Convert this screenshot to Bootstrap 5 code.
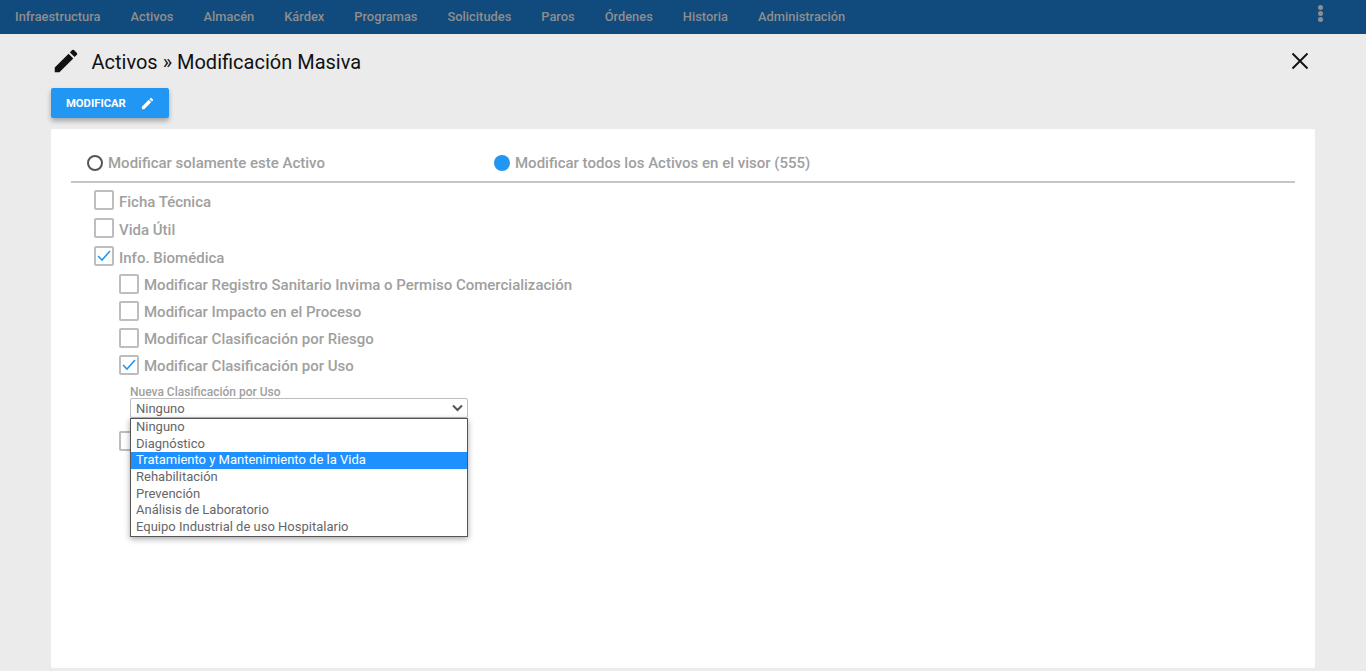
<!DOCTYPE html>
<html lang="es">
<head>
<meta charset="utf-8">
<title>Activos » Modificación Masiva</title>
<link href="https://cdn.jsdelivr.net/npm/bootstrap@5.3.0/dist/css/bootstrap.min.css" rel="stylesheet">
<style>
html,body{height:671px;overflow:hidden}
body{background:#ebebeb;font-family:Roboto,"Liberation Sans",sans-serif;color:#111}
.topbar{height:34px;background:#114b7d;padding:0 15px;gap:30px}
.topbar a{color:#8e8e8e;font-size:12.87px;font-weight:500;text-decoration:none;line-height:34px}
.dots{margin-left:auto;margin-right:28px;margin-top:-7px;display:flex;flex-direction:column;gap:1px}
.dots i{display:block;width:5px;height:5px;border-radius:50%;background:#8e8e8e}
.pagewrap{padding:0 51px}
.headrow{height:54px}
.headrow h1{font-size:20px;font-weight:400;margin:2px 0 0 10.5px;color:#111}
.closex{margin-left:auto;margin-right:6px}
.modbtn{width:118px;height:30px;background:#2196f3;color:#fff;font-size:11.25px;font-weight:700;border-radius:2px;border:0;padding:0 14px 0 15px;box-shadow:0 3px 5px rgba(0,0,0,.3)}
.modbtn:hover{background:#2196f3;color:#fff}
.modlabel{margin-top:2px}
.sheet{background:#fff;margin-top:11px;height:539px;padding:0 20px;border-radius:2px}
.radios{height:54px;border-bottom:2px solid #c8c5c5;padding:16px 0 0 16px}
.radio-item{gap:5px;color:#a0a0a0;font-size:15px;font-weight:500}
.radio-a{width:407px}
.dot{width:16px;height:16px;border-radius:50%;display:block}
.dot-off{border:2px solid #555}
.dot-on{background:#2196f3}
.checks{padding:5px 0 0 23px}
.chk-row{height:28px;gap:5px;color:#a0a0a0;font-size:15px;font-weight:500}
.sub .chk-row{height:27px}
.sub{padding-left:25px}
.box{width:20px;height:20px;border:2px solid #bdbdbd;border-radius:2px;background:#fff;flex:none;display:flex;align-items:center;justify-content:center}
.chk-row .box{margin-top:-4px}
.selectwrap{position:relative;margin:7px 0 0 11px;width:338px}
.selectwrap label{display:block;color:#a0a0a0;font-size:12px;font-weight:500;line-height:11px}
.fakeselect{height:20px;border:1px solid #bdbdbd;border-radius:2px;padding:0 4px 0 5px;font-size:13px;color:#666;line-height:19px}
.fakeselect svg{margin-left:auto}
.optlist{position:absolute;top:31px;left:0;width:338px;background:#fff;border:1px solid #555;box-shadow:0 2px 6px rgba(0,0,0,.35);z-index:5;margin:0;padding:0}
.optlist li{list-style:none;height:16.7px;line-height:16.7px;font-size:13px;color:#666;padding-left:5px;white-space:nowrap}
.optlist li.picked{background:#1e90ff;color:#fff}
.underbox{margin-top:13px}
</style>
</head>
<body>
<nav class="topbar d-flex align-items-center">
<a href="#">Infraestructura</a><a href="#">Activos</a><a href="#">Almacén</a><a href="#">Kárdex</a><a href="#">Programas</a><a href="#">Solicitudes</a><a href="#">Paros</a><a href="#">Órdenes</a><a href="#">Historia</a><a href="#">Administración</a>
<span class="dots"><i></i><i></i><i></i></span>
</nav>
<div class="pagewrap">
<div class="headrow d-flex align-items-center">
<svg width="30" height="30" viewBox="0 0 24 24" fill="#111"><path d="M3 17.25V21h3.75L17.81 9.94l-3.75-3.75L3 17.25zM20.71 7.04a1 1 0 0 0 0-1.41l-2.34-2.34a1 1 0 0 0-1.41 0l-1.83 1.83 3.75 3.75 1.83-1.83z"/></svg>
<h1>Activos » Modificación Masiva</h1>
<svg class="closex" width="18" height="18" viewBox="0 0 18 18" fill="none" stroke="#111" stroke-width="1.9"><path d="M1.5 1.5l15 15M16.5 1.5l-15 15"/></svg>
</div>
<button type="button" class="btn modbtn d-flex align-items-center justify-content-between"><span class="modlabel">MODIFICAR</span>
<svg width="15" height="15" viewBox="0 0 24 24" fill="#fff"><path d="M3 17.25V21h3.75L17.81 9.94l-3.75-3.75L3 17.25zM20.71 7.04a1 1 0 0 0 0-1.41l-2.34-2.34a1 1 0 0 0-1.41 0l-1.83 1.83 3.75 3.75 1.83-1.83z"/></svg></button>
<div class="sheet">
<div class="radios d-flex align-items-center">
<div class="radio-item radio-a d-flex align-items-center"><span class="dot dot-off"></span>Modificar solamente este Activo</div>
<div class="radio-item d-flex align-items-center"><span class="dot dot-on"></span>Modificar todos los Activos en el visor (555)</div>
</div>
<div class="checks">
<div class="chk-row d-flex align-items-center"><span class="box"></span>Ficha Técnica</div>
<div class="chk-row d-flex align-items-center"><span class="box"></span>Vida Útil</div>
<div class="chk-row d-flex align-items-center"><span class="box"><svg width="14" height="12" viewBox="0 0 14 12" fill="none" stroke="#2196f3" stroke-width="1.6"><path d="M1 6l4 4 8-9"/></svg></span>Info. Biomédica</div>
<div class="sub">
<div class="chk-row d-flex align-items-center"><span class="box"></span>Modificar Registro Sanitario Invima o Permiso Comercialización</div>
<div class="chk-row d-flex align-items-center"><span class="box"></span>Modificar Impacto en el Proceso</div>
<div class="chk-row d-flex align-items-center"><span class="box"></span>Modificar Clasificación por Riesgo</div>
<div class="chk-row d-flex align-items-center"><span class="box"><svg width="14" height="12" viewBox="0 0 14 12" fill="none" stroke="#2196f3" stroke-width="1.6"><path d="M1 6l4 4 8-9"/></svg></span>Modificar Clasificación por Uso</div>
<div class="selectwrap">
<label>Nueva Clasificación por Uso</label>
<div class="fakeselect d-flex align-items-center">Ninguno<svg width="11" height="8" viewBox="0 0 11 8" fill="none" stroke="#555" stroke-width="2"><path d="M1 1.5l4.5 4.5L10 1.5"/></svg></div>
<ul class="optlist">
<li>Ninguno</li><li>Diagnóstico</li><li class="picked">Tratamiento y Mantenimiento de la Vida</li><li>Rehabilitación</li><li>Prevención</li><li>Análisis de Laboratorio</li><li>Equipo Industrial de uso Hospitalario</li>
</ul>
</div>
<div class="underbox"><span class="box"></span></div>
</div>
</div>
</div>
</div>
<script src="https://cdn.jsdelivr.net/npm/bootstrap@5.3.0/dist/js/bootstrap.bundle.min.js"></script>
</body>
</html>
